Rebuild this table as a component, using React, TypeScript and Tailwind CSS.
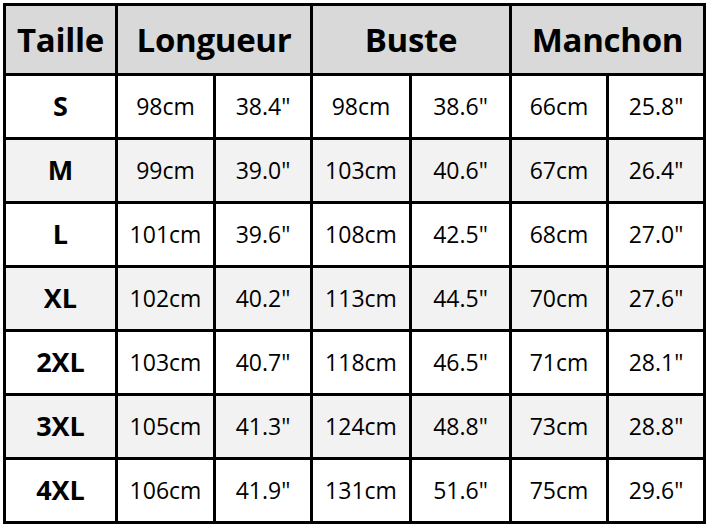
const rows = [
  ['S', '98cm', '38.4"', '98cm', '38.6"', '66cm', '25.8"'],
  ['M', '99cm', '39.0"', '103cm', '40.6"', '67cm', '26.4"'],
  ['L', '101cm', '39.6"', '108cm', '42.5"', '68cm', '27.0"'],
  ['XL', '102cm', '40.2"', '113cm', '44.5"', '70cm', '27.6"'],
  ['2XL', '103cm', '40.7"', '118cm', '46.5"', '71cm', '28.1"'],
  ['3XL', '105cm', '41.3"', '124cm', '48.8"', '73cm', '28.8"'],
  ['4XL', '106cm', '41.9"', '131cm', '51.6"', '75cm', '29.6"'],
]

export default function App() {
  return (
    <div className="w-[710px] h-[528px] bg-white p-[3px] font-['Open_Sans',sans-serif] text-black">
      <div className="grid grid-cols-[109px_95px_94px_96px_97px_94px_94px] grid-rows-[67px_repeat(7,61px)] gap-[3px] border-[3px] border-black bg-black w-[703px]">
        {/* header */}
        <div className="bg-[#d9d9d9] flex items-center justify-center text-[33px] font-bold tracking-[-0.3px]">Taille</div>
        <div className="col-span-2 bg-[#d9d9d9] flex items-center justify-center text-[33px] font-bold tracking-[-0.3px]">Longueur</div>
        <div className="col-span-2 bg-[#d9d9d9] flex items-center justify-center text-[33px] font-bold tracking-[-0.3px]">Buste</div>
        <div className="col-span-2 bg-[#d9d9d9] flex items-center justify-center text-[33px] font-bold tracking-[-0.3px]">Manchon</div>

        {rows.map((row, i) =>
          row.map((cell, j) => (
            <div
              key={`${i}-${j}`}
              className={`${i % 2 === 1 ? 'bg-[#f2f2f2]' : 'bg-white'} flex items-center justify-center ${
                j === 0 ? 'text-[27px] font-bold' : 'text-[23px]'
              }`}
            >
              {cell}
            </div>
          ))
        )}
      </div>
    </div>
  )
}
